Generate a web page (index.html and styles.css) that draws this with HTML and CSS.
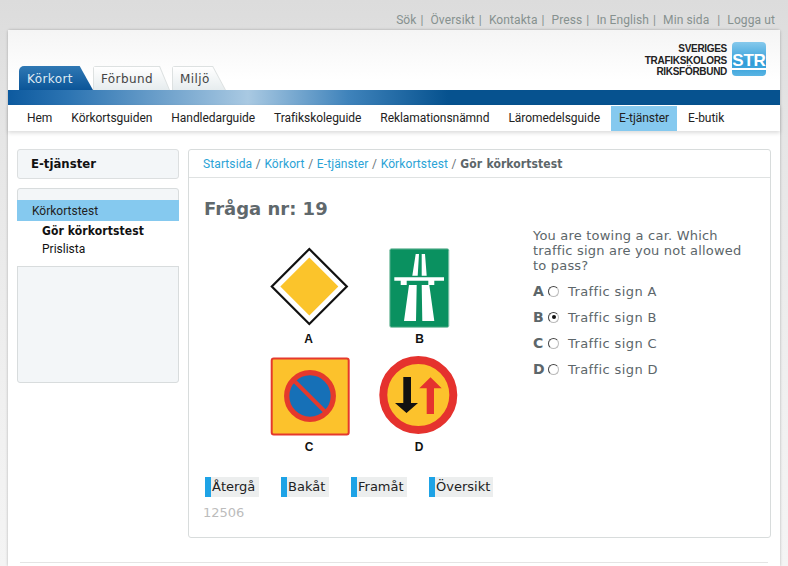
FILE: index.html
```html
<!DOCTYPE html>
<html lang="sv">
<head>
<meta charset="utf-8">
<title>Gör körkortstest</title>
<link rel="stylesheet" href="styles.css">
</head>
<body>
<nav class="toplinks">
  <a>Sök</a><span class="sep">|</span><a>Översikt</a><span class="sep">|</span><a>Kontakta</a><span class="sep">|</span><a>Press</a><span class="sep">|</span><a>In English</a><span class="sep">|</span><a>Min sida</a><span class="sep sep-wide">|</span><a>Logga ut</a>
</nav>
<div class="page">
  <header class="masthead">
    <div class="tabs">
      <a class="tab tab-active">Körkort</a>
      <a class="tab tab-second">Förbund</a>
      <a class="tab tab-third">Miljö</a>
    </div>
    <div class="logo">
      <div class="logo-text">SVERIGES<br>TRAFIKSKOLORS<br>RIKSFÖRBUND</div>
      <div class="logo-mark"><span class="logo-str">STR</span></div>
    </div>
  </header>
  <div class="bluebar"></div>
  <nav class="mainnav">
    <a>Hem</a><a>Körkortsguiden</a><a>Handledarguide</a><a>Trafikskoleguide</a><a>Reklamationsnämnd</a><a>Läromedelsguide</a><a class="current">E-tjänster</a><a>E-butik</a>
  </nav>
  <div class="columns">
    <aside class="side">
      <div class="side-title">E-tjänster</div>
      <div class="side-menu">
        <div class="side-list">
          <a class="side-current">Körkortstest</a>
          <a class="side-sub side-bold">Gör körkortstest</a>
          <a class="side-sub">Prislista</a>
        </div>
      </div>
    </aside>
    <main class="content">
      <div class="crumbs"><a>Startsida</a> / <a>Körkort</a> / <a>E-tjänster</a> / <a>Körkortstest</a> / <b>Gör körkortstest</b></div>
      <div class="inner">
        <h1>Fråga nr: 19</h1>
        <div class="quiz">
          <svg class="signs" width="230" height="230" viewBox="0 0 230 230">
            <!-- A -->
            <path d="M59.300 14 L96.800 51.500 L59.300 89 L21.800 51.500 Z" fill="#fff" stroke="#111" stroke-width="2.200"/>
            <path d="M59.300 22.500 L88.300 51.500 L59.300 80.500 L30.300 51.500 Z" fill="#fbc42b"/>
            <text x="58.500" y="108" class="sl" text-anchor="middle">A</text>
            <!-- B -->
            <rect x="139.800" y="13.800" width="59" height="78.500" rx="1.500" fill="#0a9160" stroke="#86c3ab"/>
            <path d="M165.700 19 L169 19 L167.700 40.700 L162.300 40.700 Z M171.700 19 L175 19 L176.700 40.700 L171.700 40.700 Z M159 50 L166.700 50 L166 86 L154 86 Z M171.700 50 L179.300 50 L184.300 86 L172.300 86 Z" fill="#fff"/>
            <path d="M144.300 42.300 H194 V45.700 H184.300 V50 H178.300 V45.700 H156.700 V50 H150.700 V45.700 H144.300 Z" fill="#fff"/>
            <text x="169.500" y="108" class="sl" text-anchor="middle">B</text>
            <!-- C -->
            <rect x="21.700" y="123.500" width="77" height="76" rx="2" fill="#fcc22c" stroke="#e5392c" stroke-width="2"/>
            <circle cx="60" cy="161" r="23.300" fill="#1670b7" stroke="#e5392c" stroke-width="5.300"/>
            <path d="M45 146.700 L75 176.700" stroke="#e5392c" stroke-width="4"/>
            <text x="59" y="216" class="sl" text-anchor="middle">C</text>
            <!-- D -->
            <circle cx="168.300" cy="160" r="35" fill="#fcc22c" stroke="#e5322e" stroke-width="8"/>
            <path d="M153.300 142 H161 V168 H168 L156.500 178 L145 168 H153.300 Z" fill="#111"/>
            <path d="M176.700 179 H184 V153.300 H191.700 L180.500 142.300 L169.300 153.300 H176.700 Z" fill="#e5322e"/>
            <text x="169" y="216" class="sl" text-anchor="middle">D</text>
          </svg>
          <div class="question">
            <p class="qtext">You are towing a car. Which traffic sign are you not allowed to pass?</p>
            <div class="opt"><b>A</b><span class="radio"></span><span class="opt-label">Traffic sign A</span></div>
            <div class="opt"><b>B</b><span class="radio radio-on"></span><span class="opt-label">Traffic sign B</span></div>
            <div class="opt"><b>C</b><span class="radio"></span><span class="opt-label">Traffic sign C</span></div>
            <div class="opt"><b>D</b><span class="radio"></span><span class="opt-label">Traffic sign D</span></div>
          </div>
        </div>
        <div class="buttons">
          <a class="btn btn-back">Återgå</a><a class="btn btn-prev">Bakåt</a><a class="btn btn-next">Framåt</a><a class="btn btn-over">Översikt</a>
        </div>
        <div class="code">12506</div>
      </div>
    </main>
  </div>
  <div class="footline"></div>
</div>
</body>
</html>
```
FILE: styles.css
```css
* { box-sizing: border-box; }
html, body { margin: 0; padding: 0; }
body {
  width: 788px;
  height: 566px;
  overflow: hidden;
  background: linear-gradient(#dcdcdc, #e6e6e6 140px, #f0f0f0 400px, #f4f4f4);
  font-family: "DejaVu Sans", sans-serif;
  color: #222;
}
.toplinks {
  height: 30px;
  padding: 13px 13px 0 0;
  display: flex;
  justify-content: flex-end;
  font: 12px/15px Roboto, sans-serif;
  letter-spacing: .1px;
  color: #86918f;
}
.sep { margin: 0 7px 0 4px; }
.sep-wide { margin-left: 8px; }
.page {
  margin: 0 8px;
  height: 536px;
  background: #fff;
  border-radius: 3px 3px 0 0;
  box-shadow: 0 0 3px rgba(0,0,0,.28);
}
.masthead {
  height: 60px;
  display: flex;
  justify-content: space-between;
  align-items: flex-start;
  background: linear-gradient(#f5f5f5, #fff 50px);
}
.tabs {
  display: flex;
  margin: 36px 0 0 11px;
}
.tab {
  position: relative;
  isolation: isolate;
  height: 24px;
  font: 12px/26px "DejaVu Sans", sans-serif;
  letter-spacing: .4px;
  padding-left: 8px;
  color: #444;
  background: #dde1e1;
  clip-path: polygon(0 0, var(--slant) 0, 100% 100%, 0 100%);
  border-radius: 3px 0 0 0;
}
.tab::before {
  content: "";
  position: absolute;
  inset: 1px 1px 0 1px;
  z-index: -1;
  background: linear-gradient(#fff, #e6ecee);
  clip-path: polygon(0 0, var(--slant) 0, 100% 100%, 0 100%);
}
.tab-active {
  --slant: 82%;
  width: 74px;
  color: #dfeaf3;
  line-height: 27px;
  background: linear-gradient(#2f78b4, #0b5598);
  border-radius: 5px 0 0 0;
}
.tab-active::before { display: none; }
.tab-second { --slant: 87%; width: 77px; }
.tab-third { --slant: 76%; width: 54px; margin-left: 2px; }
.logo {
  display: flex;
  align-items: flex-start;
  gap: 5px;
  margin: 12px 14px 0 0;
}
.logo-text {
  font: bold 10px/11.500px "Liberation Sans", sans-serif;
  letter-spacing: -.3px;
  text-align: right;
  color: #222;
  padding-top: 1px;
}
.logo-mark {
  width: 34px;
  height: 34px;
  border-radius: 4px;
  background: linear-gradient(#86c9ec, #2e9cd8 62%, #59b4e3);
  display: flex;
  justify-content: center;
  padding-top: 11px;
}
.logo-str {
  height: 17px;
  font: bold 17px/15px "Liberation Sans", sans-serif;
  color: #fff;
  border-bottom: 2px solid #fff;
  letter-spacing: -.2px;
}
.bluebar {
  height: 15px;
  background: linear-gradient(90deg, #0d5a9f 0, #2c74b2 60px, #a9c9e2 240px, #3f83bb 340px, #06528f 440px, #06528f);
}
.mainnav {
  height: 26px;
  display: flex;
  padding: 1px 0 0 11px;
  font: 12px/25px Roboto, sans-serif;
  letter-spacing: -.05px;
  color: #222;
  box-shadow: 0 2px 4px rgba(0,0,0,.14);
}
.mainnav a { padding: 0 8px; margin-right: 3px; }
.mainnav .current { background: #85c9ef; }
.columns {
  display: flex;
  padding: 18px 9px 0 9px;
  gap: 9px;
}
.side { width: 162px; flex: none; }
.side-title {
  height: 30px;
  font: bold 13px/28px "DejaVu Sans", sans-serif;
  font-stretch: condensed;
  padding-left: 13px;
  background: #f3f6f8;
  border: 1px solid #dcdfe0;
  border-radius: 3px;
  color: #111;
}
.side-menu {
  margin-top: 9px;
  height: 195px;
  background: #f3f6f8;
  border: 1px solid #d8dcdd;
  border-radius: 3px;
  padding-top: 11px;
}
.side-list {
  background: #fff;
  margin: 0 -1px;
  height: 67px;
  border-bottom: 1px solid #d8dcdd;
}
.side-list a { display: block; }
.side-current {
  height: 21px;
  padding-left: 15px;
  background: #85c9ef;
  font: 12px/22px Roboto, sans-serif;
  color: #222;
}
.side-sub {
  padding-left: 25px;
  font: 12px/17px Roboto, sans-serif;
  color: #111;
}
.side-bold {
  font: bold 12px/20px "DejaVu Sans", sans-serif;
  font-stretch: condensed;
  letter-spacing: .12px;
  color: #111;
}
.content {
  width: 583px;
  height: 389px;
  border: 1px solid #d8dcdc;
  border-radius: 3px;
}
.crumbs {
  height: 28px;
  padding-left: 14px;
  font: 12px/28px Roboto, sans-serif;
  letter-spacing: .1px;
  word-spacing: .5px;
  color: #6a7478;
  border-bottom: 1px solid #dfe2e2;
}
.crumbs a { color: #2ba3d6; }
.crumbs b {
  font-family: "DejaVu Sans", sans-serif;
  font-stretch: condensed;
  color: #5c666a;
}
.inner { padding: 19px 0 0 14px; }
h1 {
  margin: 0 0 0 1px;
  font: bold 18px/24px "DejaVu Sans", sans-serif;
  color: #5f686c;
}
.quiz {
  display: flex;
  height: 256px;
}
.signs { margin: 14px 0 0 47px; flex: none; display: block; }
.question { margin-left: 53px; width: 216px; padding-top: 7px; font: 13px/15px "DejaVu Sans", sans-serif; color: #5c666a; }
.qtext { margin: 0 0 5px; letter-spacing: .2px; }
.sl { font: bold 12px "Liberation Sans", sans-serif; fill: #111; }
.opt { height: 26px; display: flex; align-items: center; }
.opt b { width: 15px; font-size: 14px; color: #5c666a; }
.opt-label { letter-spacing: .4px; }
.radio {
  width: 11px;
  height: 11px;
  border: 1px solid #444;
  border-right-color: #bbb;
  border-bottom-color: #bbb;
  border-radius: 50%;
  background: #fff;
  margin-right: 9px;
  position: relative;
}
.radio-on::after {
  content: "";
  position: absolute;
  left: 2.500px;
  top: 2.500px;
  width: 4px;
  height: 4px;
  border-radius: 50%;
  background: #111;
}
.buttons { display: flex; padding-left: 2px; }
.btn {
  height: 20px;
  font: 13px/20px "DejaVu Sans", sans-serif;
  color: #222;
  background: linear-gradient(90deg, #1ea3e6 0, #1ea3e6 6px, #eceeee 6px);
  padding-left: 7px;
  margin-right: 22px;
}
.btn-back { width: 54px; }
.btn-prev { width: 48px; }
.btn-next { width: 56px; }
.btn-over { width: 64px; }
.code { margin-top: 8px; font: 13px/16px "DejaVu Sans", sans-serif; color: #bcbcbc; }
.footline { margin: 24px 12px 0; border-top: 1px solid #e4e4e4; }
```
